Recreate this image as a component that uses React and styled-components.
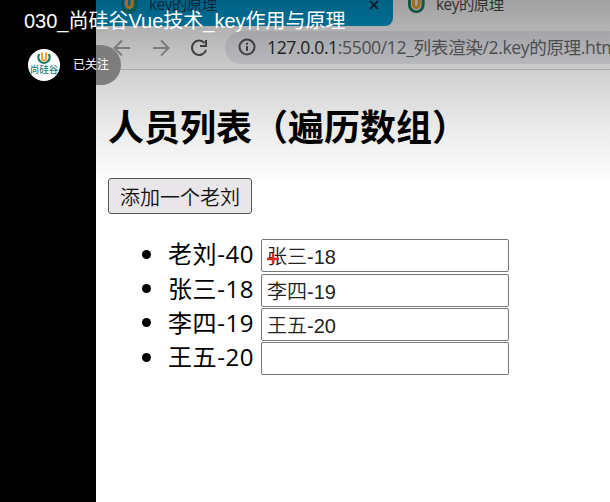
import React from 'react';
import styled, { createGlobalStyle } from 'styled-components';

const Global = createGlobalStyle`
  * { box-sizing: border-box; }
  body { margin: 0; background: #000; overflow: hidden; }
`;
const cjk = '"Noto Sans CJK SC", sans-serif';

const Player = styled.div`
  position: relative;
  width: 610px;
  height: 502px;
  padding-left: 96px;
  background: #000;
  overflow: hidden;
`;
const Browser = styled.div`
  display: flex;
  flex-direction: column;
  height: 100%;
  background: #fff;
  overflow: hidden;
`;
const TabStrip = styled.div`
  display: flex;
  height: 26px;
  flex: none;
  background: #fbfbfb;
`;
const Tab = styled.div`
  display: flex;
  align-items: flex-start;
  flex: none;
  width: ${p => p.$width}px;
  padding-left: ${p => p.$pad}px;
  gap: 10px;
  background: ${p => (p.$blue ? '#009ad0' : 'transparent')};
  border-bottom-right-radius: 8px;
  color: ${p => (p.$blue ? '#123c58' : '#4a4a4a')};
  svg { flex: none; }
`;
const TabTitle = styled.span`
  flex: 1;
  font: 15.4px/20px "Open Sans", ${cjk};
  letter-spacing: -0.5px;
  margin-top: -5px;
  white-space: nowrap;
`;
const Close = styled.svg`
  margin: 0 13px 0 0;
`;
const Toolbar = styled.div`
  display: flex;
  align-items: center;
  flex: none;
  height: 44px;
  padding-left: 17px;
  border-bottom: 1px solid #d0d0d0;
  background: #fbfbfb;
`;
const NavIcon = styled.svg`
  flex: none;
  margin-right: ${p => p.$gap}px;
`;
const Address = styled.div`
  display: flex;
  align-items: center;
  flex: none;
  width: 420px;
  height: 33px;
  margin-top: -1px;
  padding-left: 13px;
  gap: 11px;
  border-radius: 17px;
  background: #e6e7ec;
`;
const Url = styled.span`
  font: 17.6px/30px "Open Sans", ${cjk};
  letter-spacing: -0.38px;
  color: #666;
  white-space: nowrap;
  b { font-weight: 400; color: #2b2b2f; }
`;
const Page = styled.main`
  padding: 31px 12px;
  color: #000;
`;
const Heading = styled.h2`
  margin: 0;
  height: 77px;
  font: 700 36px/48px ${cjk};
  white-space: nowrap;
`;
const AddButton = styled.button`
  display: block;
  width: 144px;
  height: 36px;
  padding: 2px 0 0;
  border: 1.5px solid #555;
  border-radius: 3px;
  background: #e9e7e9;
  color: #111;
  font: 350 20px/30px ${cjk};
`;
const People = styled.ul`
  margin: 25px 0 0;
  padding: 0;
  list-style: none;
`;
const Person = styled.li`
  display: flex;
  align-items: center;
  height: 34.4px;
  padding-left: 34px;
  &::before {
    content: '';
    width: 9px;
    height: 9px;
    margin-right: 17px;
    margin-top: -4px;
    border-radius: 50%;
    background: #000;
  }
`;
const Name = styled.span`
  width: 93px;
  margin-top: -4px;
  font: 400 24px/32px "Open Sans", ${cjk};
  letter-spacing: 0.6px;
  white-space: nowrap;
`;
const Field = styled.input`
  width: 248px;
  height: 33px;
  margin-top: -1px;
  padding: 0 5px;
  border: 1.5px solid #777;
  border-radius: 2px;
  background: #fff;
  color: #222;
  font: 350 20px/28px "Liberation Sans", ${cjk};
  outline: none;
`;
const Shade = styled.div`
  position: absolute;
  inset: 0 0 auto 0;
  height: 184px;
  background: linear-gradient(rgba(0,0,0,.36), rgba(0,0,0,.19) 70px, rgba(0,0,0,.08) 130px, transparent);
  pointer-events: none;
`;
const VideoHeader = styled.header`
  position: absolute;
  top: 6px;
  left: 24px;
  color: #fff;
`;
const VideoTitle = styled.h1`
  margin: 0;
  font: 400 20px/30px "Liberation Sans", ${cjk};
  white-space: nowrap;
`;
const Follow = styled.div`
  display: flex;
  align-items: center;
  width: 97px;
  height: 40px;
  margin-top: 9px;
  padding-left: 4px;
  gap: 13px;
  border-radius: 20px;
  background: linear-gradient(90deg, #000 72px, #7d7d7d 72px);
  font: 400 12px/18px ${cjk};
`;
const FollowLabel = styled.span`
  margin-top: -2px;
`;
const Cursor = styled.svg`
  position: absolute;
  left: 267px;
  top: 252px;
`;

const Mark = () => (
  <svg width="20" height="20" viewBox="0 0 20 20" fill="none">
    <path d="M3.5 -3V5a6.8 6.8 0 0 0 13.6 0V-3" stroke="#168272" strokeWidth="3" />
    <path d="M7.4 -3V4.6a2.9 2.9 0 0 0 5.8 0V-3" stroke="#f0a92c" strokeWidth="3.2" />
  </svg>
);

const Avatar = () => (
  <svg width="32" height="32" viewBox="0 0 32 32">
    <circle cx="16" cy="16" r="16" fill="#fff" />
    <g fill="none">
      <path d="M11.3 5.2a5.6 5.6 0 1 0 9.4 0" stroke="#137c70" strokeWidth="2.2" />
      <path d="M14 3.4v6.2a2 2 0 0 0 4 0V3.4" stroke="#f2a13a" strokeWidth="2.1" />
    </g>
    <text x="16" y="24" textAnchor="middle" fontFamily="Noto Sans CJK SC" fontWeight="500" fontSize="9.5" fill="#168074">尚硅谷</text>
  </svg>
);

const people = [
  ['老刘-40', '张三-18'],
  ['张三-18', '李四-19'],
  ['李四-19', '王五-20'],
  ['王五-20', ''],
];

export default function App() {
  return (
    <Player>
      <Global />
      <Browser>
        <TabStrip>
          <Tab $blue $width={297} $pad={23}>
            <Mark />
            <TabTitle>key的原理</TabTitle>
            <Close width="12" height="12" viewBox="0 0 12 12"><path d="M2 1l8 8M10 1l-8 8" stroke="#123043" strokeWidth="1.8" /></Close>
          </Tab>
          <Tab $width={217} $pad={13}>
            <Mark />
            <TabTitle>key的原理</TabTitle>
          </Tab>
        </TabStrip>
        <Toolbar>
          <NavIcon $gap={20} width="19" height="18" fill="none" stroke="#a2a2a2" strokeWidth="2"><path d="M17 9H2M9 1.5L1.5 9L9 16.5" /></NavIcon>
          <NavIcon $gap={19} width="19" height="18" fill="none" stroke="#a2a2a2" strokeWidth="2"><path d="M1 9h15M9 1.5L16.5 9L9 16.5" /></NavIcon>
          <NavIcon $gap={17} width="18" height="18" fill="none" stroke="#555" strokeWidth="2"><path d="M14.5 4A7.2 7.2 0 1 0 16 11M16 1v6h-6" /></NavIcon>
          <Address>
            <svg width="18" height="18" fill="none" stroke="#55555a" strokeWidth="2"><circle cx="9" cy="9" r="7.5" /><path d="M9 8v5M9 4.8v2" /></svg>
            <Url><b>127.0.0.1</b>:5500/12_列表渲染/2.key的原理.html</Url>
          </Address>
        </Toolbar>
        <Page>
          <Heading>人员列表（遍历数组）</Heading>
          <AddButton>添加一个老刘</AddButton>
          <People>
            {people.map(([name, value]) => (
              <Person key={name}>
                <Name>{name}</Name>
                <Field defaultValue={value} />
              </Person>
            ))}
          </People>
        </Page>
      </Browser>
      <Cursor width="12" height="13" stroke="#d92d20" strokeWidth="2.4"><path d="M6 1v11M0 7h12" /></Cursor>
      <Shade />
      <VideoHeader>
        <VideoTitle>030_尚硅谷Vue技术_key作用与原理</VideoTitle>
        <Follow><Avatar /><FollowLabel>已关注</FollowLabel></Follow>
      </VideoHeader>
    </Player>
  );
}
